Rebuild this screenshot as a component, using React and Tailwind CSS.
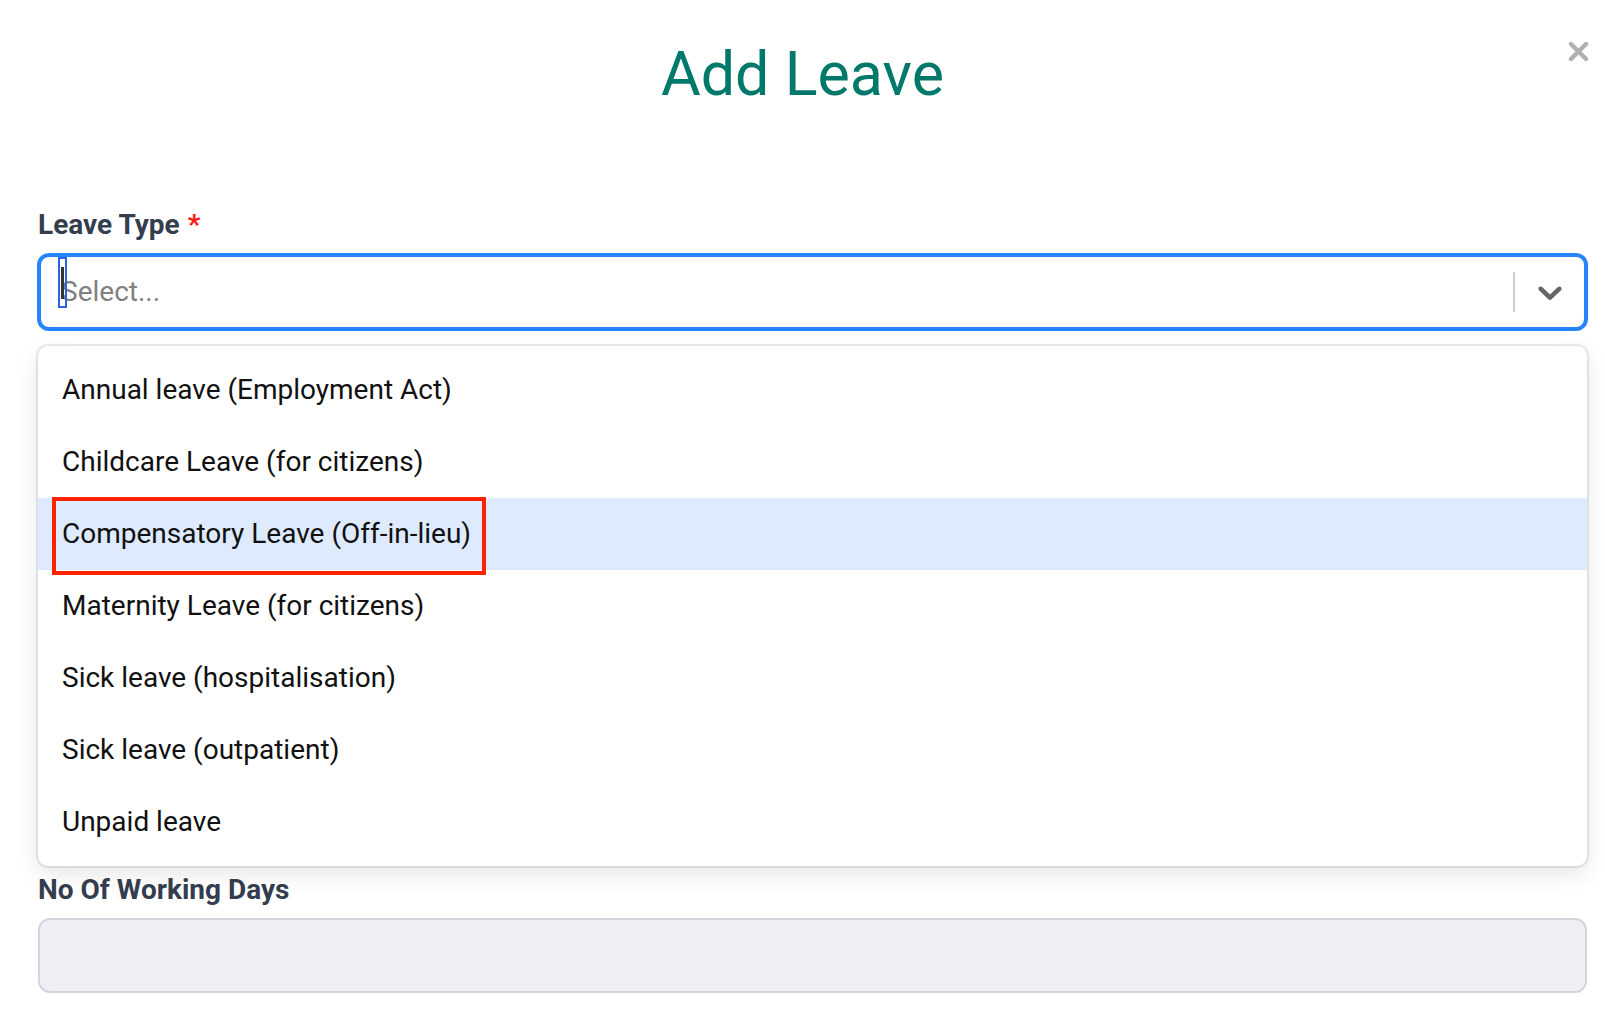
import React from 'react';

const options = [
  'Annual leave (Employment Act)',
  'Childcare Leave (for citizens)',
  'Compensatory Leave (Off-in-lieu)',
  'Maternity Leave (for citizens)',
  'Sick leave (hospitalisation)',
  'Sick leave (outpatient)',
  'Unpaid leave',
];

const Chevron = () => (
  <svg width="40" height="40" viewBox="0 0 20 20" fill="#666666">
    <path d="M4.516 7.548c0.436-0.446 1.043-0.481 1.576 0l3.908 3.747 3.908-3.747c0.533-0.481 1.141-0.446 1.574 0 0.436 0.445 0.408 1.197 0 1.615-0.406 0.418-4.695 4.502-4.695 4.502-0.217 0.223-0.502 0.335-0.787 0.335s-0.57-0.112-0.789-0.335c0 0-4.287-4.084-4.695-4.502s-0.436-1.17 0-1.615z" />
  </svg>
);

const Label = ({ children, required }) => (
  <label className="block text-[28px] leading-[42px] font-bold text-[#343e4f]">
    {children}
    {required && <span className="ml-2 text-[#ff1a1a]">*</span>}
  </label>
);

export default function App() {
  return (
    <div className="relative w-full min-h-[1013px] bg-white overflow-hidden" style={{ fontFamily: 'Roboto, "Liberation Sans", sans-serif' }}>
      {/* close button */}
      <button className="absolute top-[41px] right-[16px] w-[21px] h-[21px]">
        <svg width="21" height="21" viewBox="0 0 21 21">
          <line x1="3" y1="3" x2="18" y2="18" stroke="#b0b0b0" strokeWidth="4.4" strokeLinecap="round" />
          <line x1="18" y1="3" x2="3" y2="18" stroke="#b0b0b0" strokeWidth="4.4" strokeLinecap="round" />
        </svg>
      </button>

      <div className="pt-[37px] text-center">
        <h1 className="text-[61px] leading-[74px] font-normal text-[#00796b]">Add Leave</h1>
      </div>

      <div className="mt-[93px] pl-[38px] pr-[18px] pb-[20px]">
        {/* Leave type */}
        <div className="relative z-10">
          <Label required>Leave Type</Label>
          <div className="relative mt-[7px]">
            <div className="h-[78px] -mx-px rounded-[12px] border-4 border-[#2684ff] bg-white flex items-center">
              <div className="relative flex-1 pl-[20px] flex items-center">
                <span className="text-[28px] text-[#808080]">Select...</span>
                <span className="absolute left-[17px] top-[-14px] w-[9px] h-[51px] border-2 border-[#2a62e6] flex justify-center">
                  <span className="mt-[8px] w-[3px] h-[32px] bg-[#333]" />
                </span>
              </div>
              <div className="flex items-center h-full">
                <span className="w-[2px] h-[40px] bg-[#cccccc]" />
                <span className="ml-[15px] mr-[14px] flex items-center">
                  <Chevron />
                </span>
              </div>
            </div>

            {/* menu */}
            <div className="absolute left-0 right-0 top-[calc(100%+15px)] rounded-[10px] bg-white py-2 shadow-[0_0_0_2px_rgba(0,0,0,0.08),0_8px_22px_rgba(0,0,0,0.1)]">
              {options.map((opt, i) => (
                <div
                  key={opt}
                  className={`relative h-[72px] px-6 flex items-center text-[28px] text-[#111] ${i === 2 ? 'bg-[#deebff]' : ''}`}
                >
                  {opt}
                  {i === 2 && (
                    <span className="absolute left-[14px] top-[-1px] w-[434px] h-[78px] border-4 border-[#ff2200]" />
                  )}
                </div>
              ))}
            </div>
          </div>
        </div>

        <div className="mt-[538px]">
          <Label>No Of Working Days</Label>
          <div className="mt-[7px] h-[75px] rounded-[12px] border-2 border-[#d3d5dc] bg-[#eff0f3]" />
        </div>
      </div>
    </div>
  );
}
